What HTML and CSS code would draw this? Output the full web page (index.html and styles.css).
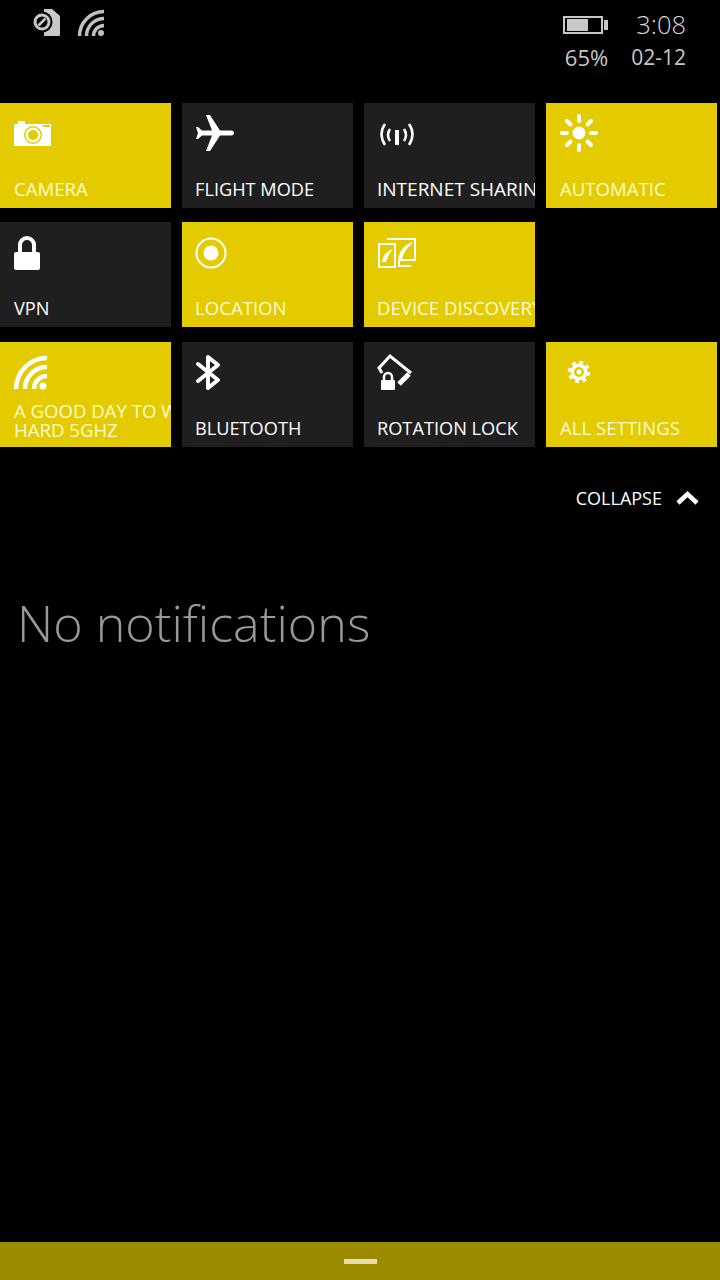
FILE: index.html
```html
<!DOCTYPE html>
<html lang="en">
<head>
  <meta charset="UTF-8" />
  <title>Action Center</title>
  <link rel="stylesheet" href="styles.css">
</head>
<body>

<div class="screen">
  <div class="status-bar">
    <div class="status-icons">
      <svg class="sim-icon" width="34" height="30" viewBox="0 0 34 30">
        <path d="M14 1H22L30 8V27a1 1 0 0 1-1 1H14Z" fill="#c8c8c8"/>
        <circle cx="12" cy="14" r="10.5" fill="#000"/>
        <circle cx="12" cy="14" r="7" fill="none" stroke="#c8c8c8" stroke-width="3"/>
        <path d="M8.5 17.5L15.5 10.5" stroke="#c8c8c8" stroke-width="2.5"/>
      </svg>
      <svg class="wifi-small" width="28" height="30" viewBox="0 0 28 30">
        <g fill="none" stroke="#c0c0c0" stroke-width="3.5">
          <path d="M3.5 28A24.500 24.500 0 0 1 28 3.500"/>
          <path d="M10.500 28A17.500 17.500 0 0 1 28 10.500"/>
          <path d="M17.500 28A10.500 10.500 0 0 1 28 17.500"/>
        </g>
        <circle cx="25" cy="25" r="3" fill="#c0c0c0"/>
      </svg>
    </div>
    <div class="status-info">
      <svg class="battery" width="46" height="20" viewBox="0 0 46 20">
        <rect x="1" y="1" width="38" height="16" fill="none" stroke="#c8c8c8" stroke-width="2"/>
        <rect x="4" y="3" width="21" height="12" fill="#c8c8c8"/>
        <rect x="41" y="4" width="4" height="10" fill="#c8c8c8"/>
      </svg>
      <span class="status-time">3:08</span>
      <span class="status-text percent">65%</span>
      <span class="status-text">02-12</span>
    </div>
  </div>

  <div class="tiles">
    <div class="tile on">
      <svg class="tile-icon" viewBox="0 0 40 40">
        <path d="M1 12a1 1 0 0 1 1-1h3v-2a1 1 0 0 1 1-1h5a1 1 0 0 1 1 1v2h26v22H2a1 1 0 0 1-1-1Z" fill="#fff"/>
        <circle cx="20" cy="22" r="9" fill="#e3cb00"/>
        <circle cx="20" cy="22" r="7.500" fill="#fff"/>
        <circle cx="20" cy="22" r="5" fill="#e3cb00"/>
        <rect x="30" y="12" width="7" height="2" fill="#e3cb00"/>
      </svg>
      <div class="tile-label">CAMERA</div>
    </div>
    <div class="tile">
      <svg class="tile-icon" viewBox="0 0 40 40">
        <path d="M39 20c0 1.500-1 2.500-3 2.500H25L15 38H11L17 22.500H7L3 26H1L3 20L1 14H3L7 17.500H17L11 2H15L25 17.500H36c2 0 3 1 3 2.500Z" fill="#fff"/>
      </svg>
      <div class="tile-label">FLIGHT MODE</div>
    </div>
    <div class="tile">
      <svg class="tile-icon" viewBox="0 0 40 40">
        <g fill="none" stroke="#fff" stroke-width="2.500">
          <path d="M8 11Q1 21 8 32"/>
          <path d="M13 16Q9 22 13 28"/>
          <path d="M32 11Q39 21 32 32"/>
          <path d="M27 16Q31 22 27 28"/>
        </g>
        <rect x="18" y="17" width="4" height="15" fill="#fff"/>
      </svg>
      <div class="tile-label wide">INTERNET SHARING</div>
    </div>
    <div class="tile on">
      <svg class="tile-icon" viewBox="0 0 40 40">
        <circle cx="20" cy="20" r="6.500" fill="#fff"/>
        <g stroke="#fff" stroke-width="4" stroke-linecap="round">
          <path d="M20 3V8"/>
          <path d="M20 32V37"/>
          <path d="M3 20H8"/>
          <path d="M32 20H37"/>
          <path d="M8 8L11.500 11.500"/>
          <path d="M32 8L28.500 11.500"/>
          <path d="M8 32L11.500 28.500"/>
          <path d="M32 32L28.500 28.500"/>
        </g>
      </svg>
      <div class="tile-label">AUTOMATIC</div>
    </div>

    <div class="tile">
      <svg class="tile-icon" viewBox="0 0 40 40">
        <path d="M7 21V13a7 7 0 0 1 14 0V21" fill="none" stroke="#fff" stroke-width="4"/>
        <rect x="1" y="20" width="26" height="18" rx="2" fill="#fff"/>
      </svg>
      <div class="tile-label">VPN</div>
    </div>
    <div class="tile on">
      <svg class="tile-icon" viewBox="0 0 40 40">
        <circle cx="16" cy="21" r="14.500" fill="none" stroke="#fff" stroke-width="2"/>
        <circle cx="16" cy="21" r="7.500" fill="#fff"/>
      </svg>
      <div class="tile-label">LOCATION</div>
    </div>
    <div class="tile on">
      <svg class="tile-icon" viewBox="0 0 40 40">
        <g fill="none" stroke="#fff" stroke-width="2">
          <path d="M10 7H38V28H22"/>
          <path d="M22 28V34M21 34H34"/>
          <rect x="2" y="12" width="16" height="23"/>
        </g>
        <path d="M5 30C6 24 9 19 16 17C13 20 11 25 9 30Z" fill="#fff"/>
        <path d="M21 27C23 18 28 12 36 10C34 13 31 15 29 18C27 21 26 24 25 27Z" fill="#fff"/>
      </svg>
      <div class="tile-label">DEVICE DISCOVERY</div>
    </div>
    <div class="tile-empty"></div>

    <div class="tile on">
      <svg class="tile-icon" viewBox="0 0 40 40">
        <g fill="none" stroke="#fff" stroke-width="4.500">
          <path d="M3 37A31 31 0 0 1 34 6"/>
          <path d="M12 37A22 22 0 0 1 34 15"/>
          <path d="M21 37A13 13 0 0 1 34 24"/>
        </g>
        <circle cx="30" cy="34" r="3.500" fill="#fff"/>
      </svg>
      <div class="tile-label two-line">A GOOD DAY TO WORK<br>HARD 5GHZ</div>
    </div>
    <div class="tile">
      <svg class="tile-icon" viewBox="0 0 40 40">
        <path d="M3 12L23 28L13 36V5L23 13L3 29" fill="none" stroke="#fff" stroke-width="4" stroke-linejoin="round" stroke-linecap="round"/>
      </svg>
      <div class="tile-label">BLUETOOTH</div>
    </div>
    <div class="tile">
      <svg class="tile-icon" viewBox="0 0 40 40">
        <path d="M5 21L2 16L13 4L34 21" fill="none" stroke="#fff" stroke-width="3"/>
        <path d="M22 32L32 22" stroke="#fff" stroke-width="5"/>
        <path d="M7 28V25a4 4 0 0 1 8 0V28" fill="none" stroke="#fff" stroke-width="2.500"/>
        <rect x="4" y="28" width="14" height="10" rx="1" fill="#fff"/>
      </svg>
      <div class="tile-label">ROTATION LOCK</div>
    </div>
    <div class="tile on">
      <svg class="tile-icon" viewBox="0 0 40 40">
        <circle cx="20" cy="20" r="8.500" fill="#fff"/>
        <circle cx="20" cy="20" r="9.500" fill="none" stroke="#fff" stroke-width="3.500" stroke-dasharray="3.730 3.730"/>
        <circle cx="20" cy="20" r="5" fill="#e3cb00"/>
        <circle cx="20" cy="20" r="2.500" fill="#fff"/>
      </svg>
      <div class="tile-label">ALL SETTINGS</div>
    </div>
  </div>

  <div class="collapse-row">
    <span>COLLAPSE</span>
    <svg width="26" height="18" viewBox="0 0 26 18">
      <path d="M3 14L12.500 5L22 14" fill="none" stroke="#fff" stroke-width="4.500"/>
    </svg>
  </div>

  <div class="empty-message">No notifications</div>

  <div class="bottom-bar">
    <div class="handle"></div>
  </div>
</div>

</body>
</html>
```

FILE: styles.css
```css
body {
  margin: 0;
  background: #000;
  font-family: 'Open Sans', sans-serif;
}

.screen {
  width: 720px;
  height: 1280px;
  display: flex;
  flex-direction: column;
  overflow: hidden;
}

.status-bar {
  height: 103px;
  display: flex;
  justify-content: space-between;
  align-items: flex-start;
  color: #c8c8c8;
}

.status-icons {
  display: flex;
  gap: 12px;
  padding: 8px 0 0 30px;
}

.status-info {
  display: grid;
  grid-template-columns: 46px auto;
  column-gap: 22px;
  row-gap: 4px;
  align-items: center;
  justify-items: center;
  padding: 10px 34px 0 0;
}

.battery {
  align-self: start;
  margin-top: 6px;
}

.status-time {
  justify-self: end;
  color: #d8d8d8;
  font-size: 25.5px;
  font-weight: 300;
  line-height: 28px;
}

.status-text {
  font-size: 21px;
  line-height: 30px;
}

.status-text.percent {
  justify-self: end;
  margin-right: 1px;
  font-size: 22px;
}

.tiles {
  display: grid;
  grid-template-columns: repeat(4, 171px);
  grid-auto-rows: 105px;
  column-gap: 11px;
  row-gap: 14.4px;
}

.tile {
  background: #1f1f1f;
  color: #fff;
  display: flex;
  flex-direction: column;
  justify-content: space-between;
  padding: 10px 0 9px 13px;
  box-sizing: border-box;
  overflow: hidden;
  font-size: 18.2px;
}

.tile.on {
  background: #e3cb00;
  color: #fffbd0;
  padding-bottom: 10px;
  font-size: 18.6px;
}

.tile:nth-child(4n+1) .tile-label,
.tile:nth-child(4n) .tile-label {
  margin-left: 1px;
}

.tile-icon {
  width: 40px;
  height: 40px;
  flex-shrink: 0;
}

.tile-label {
  line-height: 19px;
  white-space: nowrap;
}

.tile-label.wide {
  font-size: 19px;
}

.tile-label.two-line {
  margin-bottom: -2px;
}

.collapse-row {
  display: flex;
  justify-content: flex-end;
  align-items: center;
  gap: 13px;
  padding: 39px 19px 0 0;
  color: #fff;
  font-size: 18px;
  line-height: 24px;
}

.empty-message {
  margin-top: 78px;
  padding-left: 17px;
  color: #999;
  font-size: 50.2px;
  font-weight: 300;
  line-height: 70px;
}

.bottom-bar {
  margin-top: auto;
  height: 38px;
  background: #9c8a00;
  display: flex;
  justify-content: center;
  padding-top: 17px;
  box-sizing: border-box;
}

.handle {
  width: 33px;
  height: 5px;
  background: #e3dcae;
}
```
